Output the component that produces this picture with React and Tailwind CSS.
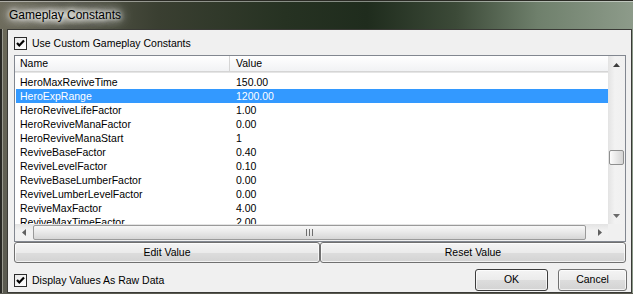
import React from "react";

const rows = [
  ["HeroMaxReviveTime", "150.00"],
  ["HeroExpRange", "1200.00", true],
  ["HeroReviveLifeFactor", "1.00"],
  ["HeroReviveManaFactor", "0.00"],
  ["HeroReviveManaStart", "1"],
  ["ReviveBaseFactor", "0.40"],
  ["ReviveLevelFactor", "0.10"],
  ["ReviveBaseLumberFactor", "0.00"],
  ["ReviveLumberLevelFactor", "0.00"],
  ["ReviveMaxFactor", "4.00"],
  ["ReviveMaxTimeFactor", "2.00"],
];

function CheckBox() {
  return (
    <div className="w-[13px] h-[13px] border border-[#2b2b2b] bg-[linear-gradient(135deg,#e8e8e8,#ffffff)] flex items-center justify-center shrink-0">
      <svg width="11" height="11" viewBox="0 0 11 11">
        <path d="M2 5 L4.3 7.5 L9 2.5" fill="none" stroke="#000" strokeWidth="2.2" />
      </svg>
    </div>
  );
}

function Btn({ children, className = "" }) {
  return (
    <div
      className={
        "h-full flex items-center justify-center rounded-[3px] border bg-[linear-gradient(#f4f4f4,#ebebeb_50%,#dddddd_51%,#d3d3d3)] shadow-[inset_0_0_0_1px_rgba(255,255,255,0.7)] " +
        className
      }
    >
      {children}
    </div>
  );
}

export default function App() {
  return (
    <div className="w-[633px] h-[294px] flex flex-col overflow-hidden font-['Liberation_Sans',Arial,sans-serif] text-[10.5px] text-black bg-[#4a4a42]">
      {/* Title bar */}
      <div className="h-[29px] shrink-0 flex items-center pl-[9px] border-t border-[#2a2a24] shadow-[inset_0_1px_0_rgba(255,255,255,0.45)] bg-[linear-gradient(to_right,#6d6b5c_0%,#56574a_12%,#3a3f31_25%,#263222_45%,#1f2c1d_58%,#3c4a38_72%,#6f806c_85%,#8d9b8a_100%)]">
        <span className="text-[12px] pb-[1px] rounded-[8px] bg-[radial-gradient(ellipse_at_center,rgba(235,235,225,0.55),rgba(235,235,225,0)_75%)] [text-shadow:0_0_4px_#fff,0_0_8px_#fff,0_0_12px_#fff,0_0_16px_rgba(255,255,255,0.8)]">
          Gameplay Constants
        </span>
      </div>

      <div className="flex flex-1 min-h-0">
        {/* left frame */}
        <div className="w-[7px] shrink-0 flex">
          <div className="w-[2px] bg-[#2a2a26]" />
          <div className="w-[1px] bg-[#9a9a90]" />
          <div className="flex-1 bg-[linear-gradient(#6a6858,#5a5a50)]" />
        </div>

        {/* client */}
        <div className="w-[625px] shrink-0 bg-[#f0f0f0] border border-[#3a3a36] flex flex-col">
          {/* top checkbox */}
          <div className="mt-[7px] h-[13px] ml-[6px] flex items-center gap-[5px]">
            <CheckBox />
            <span className="leading-none">Use Custom Gameplay Constants</span>
          </div>

          {/* listbox */}
          <div className="mt-[5px] ml-[6px] w-[612px] h-[187px] border border-[#828790] bg-white flex flex-col">
            <div className="h-[168px] flex">
              <div className="w-[593px] flex flex-col">
                {/* header */}
                <div className="h-[16px] shrink-0 flex bg-[linear-gradient(#ffffff,#f1f2f4)] border-b border-[#d5d5d5] shadow-[0_1px_0_#e5e5e5]">
                  <div className="w-[215px] pl-[5px] flex items-center border-r border-[#d5d5d5]">Name</div>
                  <div className="pl-[6px] flex items-center">Value</div>
                </div>
                {/* rows */}
                <div className="flex-1 overflow-hidden pt-[3px] pl-px">
                  {rows.map(([n, v, sel]) => (
                    <div
                      key={n}
                      className={
                        "h-[14px] flex items-center leading-none " +
                        (sel ? "bg-[#3399ff] text-white" : "")
                      }
                    >
                      <div className="w-[220px] pl-[4px]">{n}</div>
                      <div>{v}</div>
                    </div>
                  ))}
                </div>
              </div>
              {/* vertical scrollbar */}
              <div className="w-[17px] flex flex-col bg-[linear-gradient(to_right,#e3e3e3,#f2f2f2_40%,#f0f0f0)]">
                <div className="h-[17px] flex items-center justify-center">
                  <svg width="7" height="4" viewBox="0 0 7 4">
                    <path d="M0 4 L3.5 0 L7 4 Z" fill="#3c3c3c" />
                  </svg>
                </div>
                <div className="flex-1">
                  <div className="mt-[77px] ml-px w-[15px] h-[15px] rounded-[2px] border border-[#8e8f8f] bg-[linear-gradient(to_right,#fcfcfc,#e8e8e8_50%,#d4d4d4)]" />
                </div>
                <div className="h-[17px] flex items-center justify-center">
                  <svg width="7" height="4" viewBox="0 0 7 4">
                    <path d="M0 0 L7 0 L3.5 4 Z" fill="#6a6a6a" />
                  </svg>
                </div>
              </div>
            </div>
            {/* horizontal scrollbar row */}
            <div className="h-[17px] flex">
              <div className="w-[593px] flex bg-[linear-gradient(#e3e3e3,#f2f2f2_40%,#f0f0f0)]">
                <div className="w-[17px] flex items-center justify-center">
                  <svg width="4" height="7" viewBox="0 0 4 7">
                    <path d="M4 0 L0 3.5 L4 7 Z" fill="#606060" />
                  </svg>
                </div>
                <div className="ml-px my-px w-[553px] rounded-[2px] border border-[#9a9a9a] bg-[linear-gradient(#f8f8f8,#e8e8e8_50%,#d6d6d6)] flex items-center justify-center">
                  <svg width="7" height="7" viewBox="0 0 7 7">
                    <path d="M0.5 0 V7 M3.5 0 V7 M6.5 0 V7" stroke="#6e6e6e" strokeWidth="1" />
                  </svg>
                </div>
                <div className="flex-1" />
                <div className="w-[17px] flex items-center justify-center">
                  <svg width="4" height="7" viewBox="0 0 4 7">
                    <path d="M0 0 L4 3.5 L0 7 Z" fill="#606060" />
                  </svg>
                </div>
              </div>
              <div className="w-[17px] bg-[#f0f0f0]" />
            </div>
          </div>

          {/* edit/reset buttons */}
          <div className="h-[21px] ml-[6px] w-[612px] flex">
            <div className="flex-1">
              <Btn className="border-[#707070]">Edit Value</Btn>
            </div>
            <div className="flex-1">
              <Btn className="border-[#707070]">Reset Value</Btn>
            </div>
          </div>

          {/* bottom row */}
          <div className="mt-[6px] h-[22px] ml-[6px] mr-[4px] flex items-center">
            <CheckBox />
            <span className="ml-[5px] leading-none">Display Values As Raw Data</span>
            <div className="flex-1" />
            <div className="w-[73px] h-full">
              <Btn className="border-[#3c3c3c] border-[1px] shadow-[inset_0_0_0_1px_#5a6a7a]">OK</Btn>
            </div>
            <div className="w-[69px] h-full ml-[10px]">
              <Btn className="border-[#707070]">Cancel</Btn>
            </div>
          </div>
        </div>

        {/* right frame */}
        <div className="w-[1px] shrink-0 bg-[#8a9888]" />
      </div>
      <div className="h-[1px] shrink-0 bg-[#5a5a50]" />
    </div>
  );
}
